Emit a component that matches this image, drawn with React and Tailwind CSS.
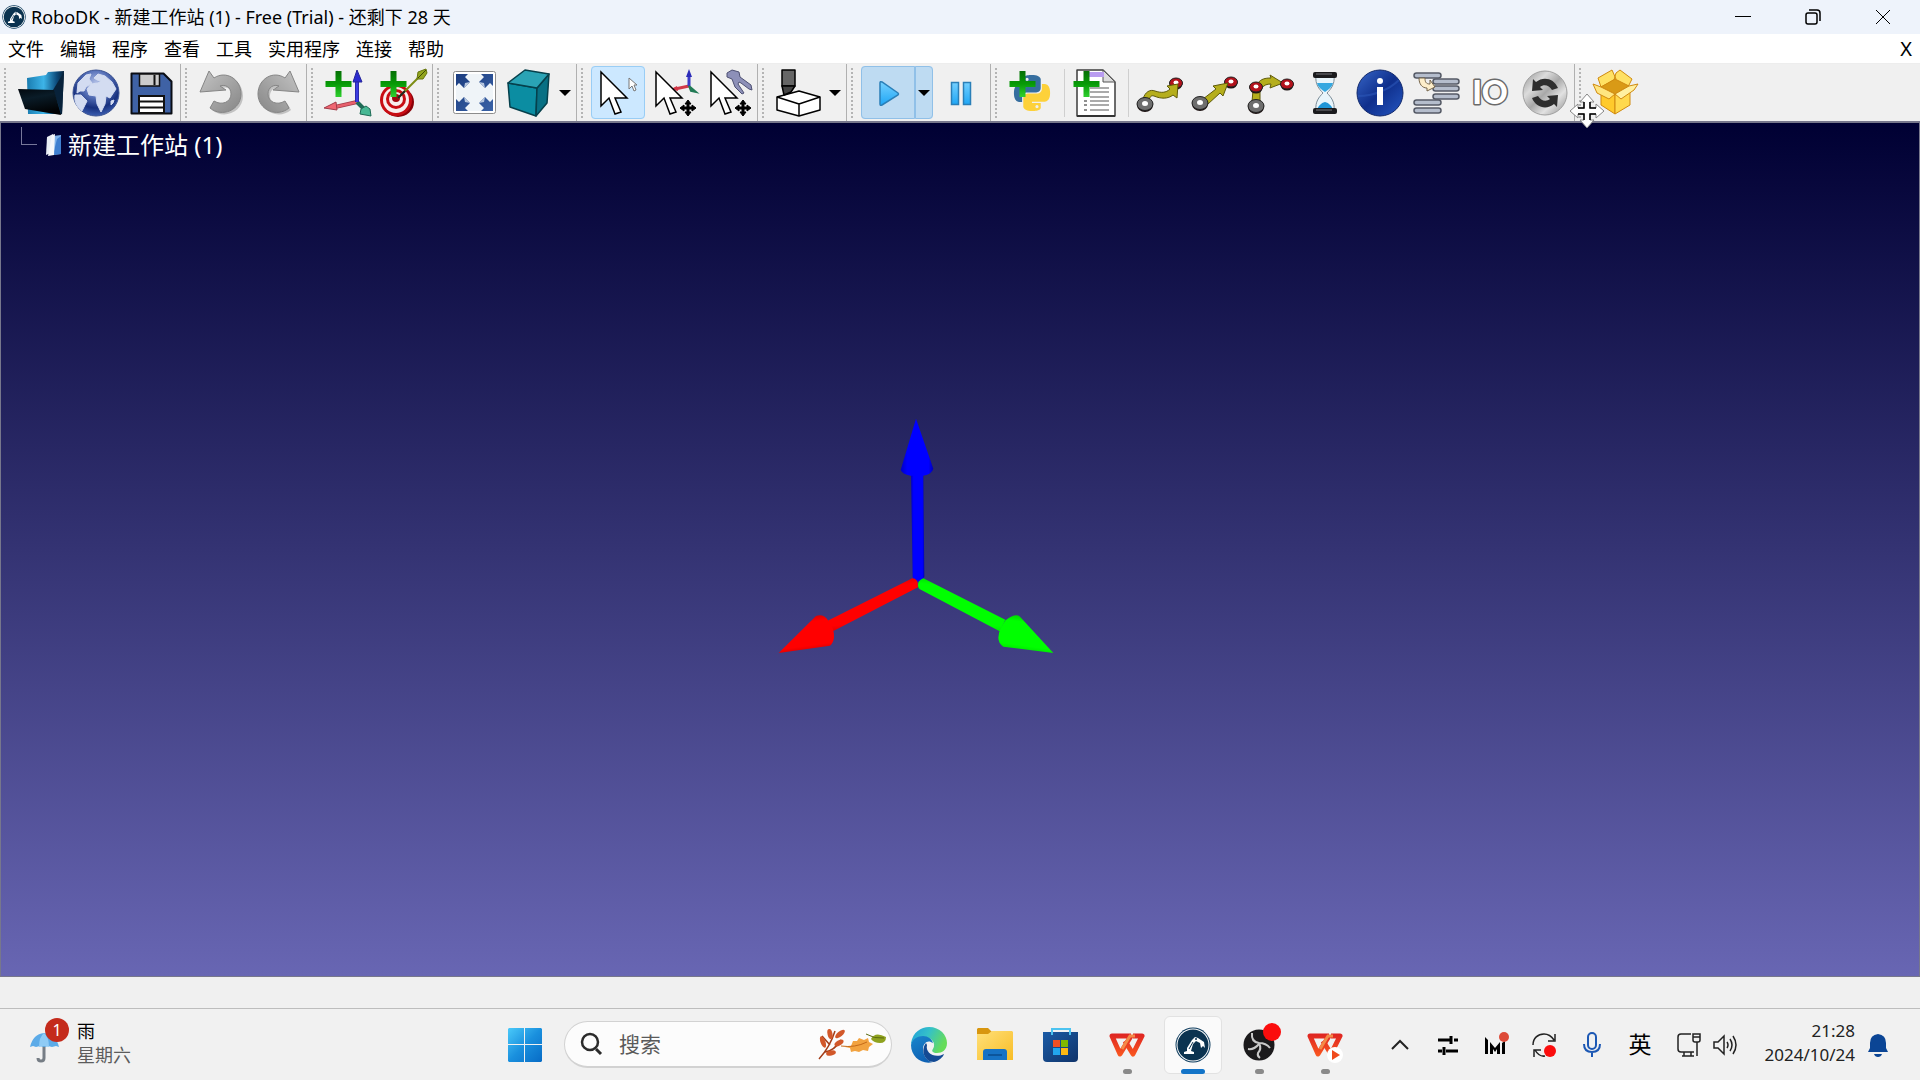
import React, { useState } from "react";

const PLUS_PATH = "M14.5 5h6v10h10v6h-10v10h-6v-10h-10v-6h10z";
const PYTHON_PATH =
  "M14.25.18l.9.2.73.26.59.3.45.32.34.34.25.34.16.33.1.3.04.26.02.2-.01.13V8.5l-.05.63-.13.55-.21.46-.26.38-.3.31-.33.25-.35.19-.35.14-.33.1-.3.07-.26.04-.21.02H8.77l-.69.05-.59.14-.5.22-.41.27-.33.32-.27.35-.2.36-.15.37-.1.35-.07.32-.04.27-.02.21v3.06H3.17l-.21-.03-.28-.07-.32-.12-.35-.18-.36-.26-.36-.36-.35-.46-.32-.59-.28-.73-.21-.88-.14-1.05-.05-1.23.06-1.22.16-1.04.24-.87.32-.71.36-.57.4-.44.42-.33.42-.24.4-.16.36-.1.32-.05.24-.01h.16l.06.01h8.16v-.83H6.18l-.01-2.75-.02-.37.05-.34.11-.31.17-.28.25-.26.31-.23.38-.2.44-.18.51-.15.58-.12.64-.1.71-.06.77-.04.84-.02 1.27.05zm-6.3 1.98l-.23.33-.08.41.08.41.23.34.33.22.41.09.41-.09.33-.22.23-.34.08-.41-.08-.41-.23-.33-.33-.22-.41-.09-.41.09z";

const Plus = () => (
  <>
    <linearGradient id="plusFill" x1="0" y1="0" x2="0" y2="1">
      <stop offset="0" stopColor="#067006" />
      <stop offset="0.5" stopColor="#079a07" />
      <stop offset="1" stopColor="#2fd02f" />
    </linearGradient>
    <path d={PLUS_PATH} fill="url(#plusFill)" />
  </>
);

const Icon = ({ children }) => (
  <svg viewBox="0 0 54 54" className="size-[54px]" aria-hidden="true">
    {children}
  </svg>
);

const FolderIcon = () => (
  <Icon>
    <defs>
      <linearGradient id="folderBack" x1="0" y1="0" x2="1" y2="0">
        <stop offset="0" stopColor="#1a7cb0" />
        <stop offset="0.45" stopColor="#3db4e8" />
        <stop offset="0.8" stopColor="#0d4c7c" />
        <stop offset="1" stopColor="#062038" />
      </linearGradient>
      <linearGradient id="folderFront" x1="0" y1="0" x2="0.3" y2="1">
        <stop offset="0" stopColor="#02080e" />
        <stop offset="0.4" stopColor="#0a1c28" />
        <stop offset="1" stopColor="#010203" />
      </linearGradient>
    </defs>
    <path d="M13 12l19-3 2-3 16-1-2 43H14z" fill="url(#folderBack)" />
    <path d="M39 24L50 6l-2 43z" fill="#08223a" />
    <path d="M4 23l36 1 7 25-36-6z" fill="url(#folderFront)" />
  </Icon>
);

const GlobeIcon = () => (
  <Icon>
    <radialGradient id="globeFill" cx="0.5" cy="0.3" r="0.7">
      <stop offset="0" stopColor="#b9c6ea" />
      <stop offset="0.4" stopColor="#5a74bb" />
      <stop offset="0.75" stopColor="#17307e" />
      <stop offset="1" stopColor="#3c5eb0" />
    </radialGradient>
    <circle cx="27" cy="27" r="23" fill="url(#globeFill)" stroke="#3c5493" />
    <g fill="#d3dcf1" stroke="#d3dcf1" strokeLinejoin="round">
      <path d="M9 17l8-8 5-1-2 5 3 4-6 4-2 4-4 0-3 2zM6 29l6 0 6 6-3 6-2 4c-5-4-8-9-7-16z" />
      <path d="M25 12l4-4 7 2 7 6 4 7-2 3-4 6-4-2-1 8-4 8-4-8-1-8-7-1-2-6 4-5 7-1 3-2-4-1z" />
      <path d="M42 35l3-1-1 3-2 2z" />
    </g>
  </Icon>
);

const SaveIcon = () => (
  <Icon>
    <path d="M7.500 7.500h32l8 8v32h-40z" fill="#3f62a5" stroke="#0a0d14" strokeWidth="2" strokeLinejoin="round" />
    <path d="M15.500 8h20v12h-20z" fill="#ccc" stroke="#111" strokeWidth="1.500" />
    <path d="M30.500 9v10" stroke="#111" strokeWidth="2" />
    <path d="M15 30h25v17H15z" fill="#fff" stroke="#111" strokeWidth="2" />
    <path d="M15 35.500h25M15 41.500h25" stroke="#111" strokeWidth="2" />
  </Icon>
);

const TurnArrow = () => (
  <>
    <linearGradient id="turnFill" x1="0" y1="0" x2="1" y2="1">
      <stop offset="0" stopColor="#c4c4c4" />
      <stop offset="1" stopColor="#868686" />
    </linearGradient>
    <path
      d="M14 5L19 12C31 4 46 13 46 28C46 44 27 52 15 42L19 35C27 40 36 36 36 28C36 21 30 18 25 20L31 24L5 26Z"
      fill="url(#turnFill)"
      stroke="#858585"
    />
  </>
);

const TurnShadow = () => (
  <path
    d="M21 14C33 6 48 15 48 30C48 46 29 54 17 44L21 37C29 42 38 38 38 30C38 23 32 20 27 22Z"
    fill="#c2c2c2"
  />
);

const UndoIcon = () => (
  <Icon>
    <TurnShadow />
    <TurnArrow />
  </Icon>
);

const RedoIcon = () => (
  <Icon>
    <g transform="translate(54 0) scale(-1 1)">
      <g transform="translate(-4 0)">
        <TurnShadow />
      </g>
      <TurnArrow />
    </g>
  </Icon>
);

const AddFrameIcon = () => (
  <Icon>
    <path d="M36 36L14 41" stroke="#a13b48" strokeWidth="4" />
    <path d="M36 36L14 41" stroke="#e8606c" strokeWidth="2.500" />
    <path d="M3 42l12-6 1 8z" fill="#f06672" stroke="#a13b48" />
    <path d="M36 36l9 9" stroke="#1f6b56" strokeWidth="4" />
    <path d="M50 50l-11-2 1-5 5-3 4 3z" fill="#48b894" stroke="#1f6b56" />
    <path d="M36 36V12" stroke="#24249a" strokeWidth="4" />
    <path d="M36 36V12" stroke="#3c3ce0" strokeWidth="2.500" />
    <path d="M36 4l5 12h-9z" fill="#2b2bd0" stroke="#24249a" />
    <Plus />
  </Icon>
);

const AddTargetIcon = () => (
  <Icon>
    <ellipse cx="22" cy="36" rx="16" ry="15" fill="#8b0008" />
    <circle cx="20" cy="34" r="16" fill="#c80d14" />
    <circle cx="20" cy="34" r="13" fill="#f8eeee" />
    <circle cx="20" cy="33" r="10" fill="#c80d14" />
    <circle cx="20" cy="33" r="7" fill="#f8eeee" />
    <circle cx="20" cy="32" r="4" fill="#a00810" />
    <path d="M22 32l20-20" stroke="#7c8d13" strokeWidth="2" />
    <path d="M22 32l7-7" stroke="#222" strokeWidth="2" />
    <path d="M41 13l1-7 8-3 1 4-4 6z" fill="#93a61e" stroke="#66740c" />
    <path d="M42 12l8-8" stroke="#3e4a05" />
    <Plus />
  </Icon>
);

const FitAllIcon = () => (
  <Icon>
    <linearGradient id="fitFill" x1="0" y1="0" x2="1" y2="1">
      <stop offset="0" stopColor="#1b3d80" />
      <stop offset="1" stopColor="#3a62a6" />
    </linearGradient>
    <rect x="6.500" y="5.500" width="42" height="42" rx="2" fill="#fff" stroke="#8c8c8c" />
    <path d="M9 8h37v37H9z" fill="#eff4f8" />
    <path
      d="M9 8h12l-3 3 5 5-6 6-5-5-3 3zM46 8v12l-3-3-5 5-6-6 5-5-3-3zM9 45V33l3 3 5-5 6 6-5 5 3 3zM46 45H34l3-3-5-5 6-6 5 5 3-3z"
      fill="url(#fitFill)"
    />
    <path d="M18 17l5-1-6 6zM37 17l-5-1 6 6zM18 36l-1-5 6 6zM37 36l1-5-6 6z" fill="#b6c6de" />
  </Icon>
);

const CubeIcon = () => (
  <Icon>
    <g stroke="#06404c" strokeWidth="1.500" strokeLinejoin="round">
      <path d="M6 17l29 5-1 28-26-9z" fill="#0b8da2" />
      <path d="M35 22L47 8l-2 29-11 13z" fill="#087084" />
      <path d="M6 17L23 4l24 4-12 14z" fill="#2aa3b5" />
    </g>
  </Icon>
);

const BigCursor = () => (
  <path
    d="M10 6v34l8-8 6 16 6-2-6-14h12z"
    fill="#fff"
    stroke="#000"
    strokeWidth="1.500"
  />
);

const MoveCross = () => (
  <path
    d="M42 34l3 4h-2v3h3v-2l4 3-4 3v-2h-3v3h2l-3 4-3-4h2v-3h-3v2l-4-3 4-3v2h3v-3h-2z"
    fill="#000"
    stroke="#000"
  />
);

const SelectIcon = () => (
  <Icon>
    <BigCursor />
    <path d="M38 12v11l3-3 2 5 2-1-2-5h3z" fill="#fff" stroke="#777" />
  </Icon>
);

const MoveFrameIcon = () => (
  <Icon>
    <path d="M43 20l-14 3" stroke="#d13848" strokeWidth="3" />
    <path d="M25 23l6-3 1 5z" fill="#d13848" />
    <path d="M43 20V8" stroke="#3a3ac8" strokeWidth="3" />
    <path d="M43 3l3 8h-6z" fill="#2b2bb8" />
    <path d="M43 20l7 6-5-1z" fill="#2fa070" stroke="#227a55" strokeWidth="2" />
    <BigCursor />
    <MoveCross />
  </Icon>
);

const MoveToolIcon = () => (
  <Icon>
    <path
      d="M26 7l5-3 7 2 1 5 11 8 1 5-3-1-8-6-2-1-1 2 6 9-2 1-7-7-3-8-5-2z"
      fill="#8d90b8"
      stroke="#4e5173"
    />
    <BigCursor />
    <MoveCross />
  </Icon>
);

const MillIcon = () => (
  <Icon>
    <g stroke="#000" strokeWidth="1.500" strokeLinejoin="round">
      <path d="M5 31l22-6 21 6v13l-21 6-22-6z" fill="#fff" />
      <path d="M5 31l22 7 21-7M27 38v12" fill="none" />
      <path d="M10 4h13v16H10z" fill="#666" />
      <path d="M10 20h13l-4 6-7 3z" fill="#444" />
    </g>
  </Icon>
);

const PlayIcon = () => (
  <Icon>
    <linearGradient id="playFill" x1="0" y1="0" x2="0" y2="1">
      <stop offset="0" stopColor="#74d0ff" />
      <stop offset="1" stopColor="#1fa6f5" />
    </linearGradient>
    <path d="M19 17q0-2 2-1l16 11q1 1 0 2L21 39q-2 1-2-1z" fill="url(#playFill)" stroke="#2a7fb8" strokeWidth="1.500" />
  </Icon>
);

const PauseIcon = () => (
  <Icon>
    <path d="M17.500 16.500h7v22h-7zM29.500 16.500h7v22h-7z" fill="url(#playFill)" stroke="#2a7fb8" strokeWidth="1.500" />
  </Icon>
);

const PythonIcon = () => (
  <Icon>
    <g transform="translate(9 9) scale(1.500)">
      <path d={PYTHON_PATH} fill="#366e9f" />
      <path d={PYTHON_PATH} fill="#fdd13a" transform="rotate(180 12 12)" />
    </g>
    <Plus />
  </Icon>
);

const AddProgramIcon = () => (
  <Icon>
    <path d="M8 4h26l12 12v34H8z" fill="#fff" stroke="#3d3d3d" strokeWidth="1.500" strokeLinejoin="round" />
    <path d="M8 50h38" stroke="#333" strokeWidth="2" />
    <path d="M34 4v12h12z" fill="#dcdcdc" stroke="#555" />
    <path d="M15 6h20v5H15z" fill="#b99cf0" />
    <path d="M21 22h19M21 26h19M21 31h19M21 35h19M21 39h19M21 44h19" stroke="#8f8f8f" strokeWidth="1.500" />
    <path d="M15 35h3M15 39h3M15 44h3" stroke="#8f8f8f" strokeWidth="2" />
    <Plus />
  </Icon>
);

const Ring = ({ cx, cy, gray }) => (
  <>
    <ellipse cx={cx} cy={cy + 1} rx={gray ? 8 : 6.5} ry={gray ? 7 : 5.5} fill="#1d1212" />
    <ellipse cx={cx} cy={cy} rx={gray ? 8 : 6.5} ry={gray ? 6.5 : 5} fill={gray ? "#6e6e6e" : "#b3121c"} stroke="#222" />
    <ellipse cx={cx} cy={cy - 0.5} rx={gray ? 3 : 2.5} ry={gray ? 2.5 : 2} fill="#fff" />
  </>
);

const MoveJointIcon = () => (
  <Icon>
    <Ring cx={43} cy={17} />
    <path
      d="M10 33c2-7 7-10 12-8 6 2 11 2 15-2l-3-3 11-2-1 14-4-3c-5 4-12 4-19 1-3-1-4 1-5 4z"
      fill="#b5ae1c"
      stroke="#5f5b0a"
    />
    <Ring cx={12} cy={38} gray />
  </Icon>
);

const MoveLinearIcon = () => (
  <Icon>
    <Ring cx={43} cy={16} />
    <path d="M15 33l13-10-3-3 15-3-5 13-3-3-12 11z" fill="#b5ae1c" stroke="#5f5b0a" />
    <Ring cx={12} cy={37} gray />
  </Icon>
);

const MoveCircularIcon = () => (
  <Icon>
    <path d="M10 24h7v12h-8z" fill="#b5ae1c" stroke="#5f5b0a" />
    <path d="M15 17c3-4 7-5 13-5l-1-3 13 8-13 5 1-4c-4 0-7 1-9 4z" fill="#b5ae1c" stroke="#5f5b0a" />
    <Ring cx={44} cy={18} />
    <Ring cx={13} cy={21} />
    <Ring cx={13} cy={40} gray />
  </Icon>
);

const WaitIcon = () => (
  <Icon>
    <path d="M18 10h18c1 8-3 13-7 17 4 4 8 9 7 17H18c-1-8 3-13 7-17-4-4-8-9-7-17z" fill="#e8f5fb" stroke="#7d8d98" />
    <path d="M19 17h16c-1 4-4 6-8 9-4-3-7-5-8-9z" fill="#35a8e0" />
    <path d="M19 44c1-4 4-7 8-8 4 1 7 4 8 8z" fill="#1f95d6" />
    <rect x="15" y="6" width="24" height="6" rx="2" fill="#1b1b1d" />
    <rect x="15" y="42" width="24" height="6" rx="2" fill="#1b1b1d" />
    <path d="M18 8h16M18 44h16" stroke="#77777d" />
  </Icon>
);

const InfoIcon = () => (
  <Icon>
    <linearGradient id="infoFill" x1="0" y1="0" x2="1" y2="1">
      <stop offset="0" stopColor="#3766c8" />
      <stop offset="0.5" stopColor="#0f2f8c" />
      <stop offset="1" stopColor="#2557c2" />
    </linearGradient>
    <circle cx="27" cy="27" r="23" fill="url(#infoFill)" stroke="#12296c" />
    <path d="M5 30C20 30 36 24 46 14" stroke="#2b57b8" strokeWidth="2" fill="none" opacity="0.6" />
    <circle cx="27" cy="15" r="3" fill="#fff" />
    <path d="M24 21h6v18h-6z" fill="#fff" />
  </Icon>
);

const CallProgramIcon = () => (
  <Icon>
    <g fill="#b5bdcc" stroke="#555a66" strokeWidth="1.500">
      <rect x="6" y="7" width="27" height="5" rx="2.500" />
      <rect x="25" y="13" width="26" height="5" rx="2.500" />
      <rect x="25" y="20" width="26" height="5" rx="2.500" />
      <rect x="25" y="28" width="26" height="5" rx="2.500" />
      <rect x="6" y="34" width="27" height="5" rx="2.500" />
      <rect x="6" y="42" width="27" height="5" rx="2.500" />
    </g>
    <path d="M11 12h6c0 4 1 6 5 6v-4l5 7-8 4v-3c-5 0-8-4-8-10z" fill="#fdeecb" stroke="#75644a" />
  </Icon>
);

const IoIcon = () => (
  <Icon>
    <text
      x="27"
      y="38"
      textAnchor="middle"
      fontFamily="Lato, sans-serif"
      fontSize="32"
      fontWeight="900"
      fill="#fff"
      stroke="#6a6a6a"
      strokeWidth="3"
      strokeLinejoin="round"
      paintOrder="stroke"
    >
      IO
    </text>
  </Icon>
);

const SyncIcon = () => (
  <Icon>
    <linearGradient id="steelFill" x1="0" y1="0" x2="1" y2="1">
      <stop offset="0" stopColor="#8e8e8e" />
      <stop offset="0.3" stopColor="#dcdcdc" />
      <stop offset="0.5" stopColor="#a8a8a8" />
      <stop offset="0.7" stopColor="#e2e2e2" />
      <stop offset="1" stopColor="#8a8a8a" />
    </linearGradient>
    <circle cx="27" cy="27" r="22" fill="url(#steelFill)" stroke="#a0a0a0" />
    <path d="M15 13l3 3c7-6 18-4 22 6l-6 2c-3-5-8-6-12-3l3 3-11 1z" fill="#2e2e2e" />
    <path d="M39 41l-3-3c-7 6-18 4-22-6l6-2c3 5 8 6 12 3l-3-3 11-1z" fill="#2e2e2e" />
  </Icon>
);

const PackageIcon = () => (
  <Icon>
    <g stroke="#d08a10" strokeLinejoin="round">
      <path d="M9 12l14-8 4 9-15 8zM27 7l4-3 12 9-4 8-14-7z" fill="#ffe164" />
      <path d="M12 21l14-8 14 7-14 8z" fill="#d99a16" />
      <path d="M12 22l14 7v19l-14-9z" fill="#ffca2c" />
      <path d="M26 29l15-8v18L26 48z" fill="#ffd94e" />
      <path d="M4 18l8 3 14 7-6 5-12-6z" fill="#ffe680" />
      <path d="M26 28l14-8 9-2-4 6-13 9z" fill="#fff0a0" />
    </g>
  </Icon>
);

const RoboLogo = ({ className }) => (
  <svg viewBox="0 0 36 36" className={className} aria-hidden="true">
    <circle cx="18" cy="18" r="17.500" fill="#0b3a5c" />
    <circle cx="18" cy="18" r="16.500" fill="#fff" />
    <circle cx="18" cy="18" r="15.500" fill="#0b3350" />
    <path d="M9 27v-2l3-1v-3l5-8 3-3 3 1 6 4 1 6-2-2-2 2-1-5-4-2-3 3-2 7 3 1v2z" fill="#fff" />
    <path d="M14 22l4-7" stroke="#0b3350" />
    <circle cx="21" cy="12" r="1" fill="#0b3350" />
  </svg>
);

const toolGroups = [
  [
    { label: "打开", Icon: FolderIcon },
    { label: "在线库", Icon: GlobeIcon },
    { label: "保存", Icon: SaveIcon },
  ],
  [
    { label: "撤销", Icon: UndoIcon },
    { label: "重做", Icon: RedoIcon },
  ],
  [
    { label: "添加坐标系", Icon: AddFrameIcon },
    { label: "添加目标", Icon: AddTargetIcon },
  ],
  [
    { label: "适合全部", Icon: FitAllIcon },
    { label: "等轴视图", Icon: CubeIcon, menu: true },
  ],
  [
    { label: "选择", Icon: SelectIcon, mode: "select" },
    { label: "移动坐标系", Icon: MoveFrameIcon, mode: "frame" },
    { label: "移动工具", Icon: MoveToolIcon, mode: "tool" },
  ],
  [{ label: "加工", Icon: MillIcon, menu: true }],
  [
    { label: "运行", Icon: PlayIcon, menu: true, on: true },
    { label: "暂停", Icon: PauseIcon },
  ],
  [
    { label: "添加 Python", Icon: PythonIcon },
    { divider: true },
    { label: "添加程序", Icon: AddProgramIcon },
    { divider: true },
    { label: "关节运动", Icon: MoveJointIcon },
    { label: "直线运动", Icon: MoveLinearIcon },
    { label: "圆弧运动", Icon: MoveCircularIcon },
    { label: "暂停指令", Icon: WaitIcon },
    { label: "显示消息", Icon: InfoIcon },
    { label: "调用程序", Icon: CallProgramIcon },
    { label: "设置 IO", Icon: IoIcon },
    { label: "同步", Icon: SyncIcon },
  ],
  [{ label: "插件包", Icon: PackageIcon }],
];

const ToolButton = ({ tool, active, onClick }) => {
  const ToolIcon = tool.Icon;
  const split = tool.menu && tool.on;

  return (
    <div className="flex shrink-0">
      <button
        aria-label={tool.label}
        onClick={onClick}
        className={`w-[54px] h-[53px] flex items-center justify-center ${
          active ? "bg-[#cce8ff] outline -outline-offset-1 outline-[#99cdf5] rounded-sm" : ""
        } ${split ? "bg-[#bedbf2] outline -outline-offset-1 outline-[#90c0e8] rounded-l-sm" : ""}`}
      >
        <ToolIcon />
      </button>
      {tool.menu && (
        <button
          aria-label={`${tool.label}选项`}
          className={`w-[18px] h-[53px] flex items-center justify-center ${
            split ? "bg-[#bedbf2] outline -outline-offset-1 outline-[#90c0e8] rounded-r-sm" : ""
          }`}
        >
          <svg viewBox="0 0 12 6" className="w-3 h-[6px]" aria-hidden="true">
            <path d="M0 0h12L6 6z" />
          </svg>
        </button>
      )}
    </div>
  );
};

const Toolbar = () => {
  const [mode, setMode] = useState("select");

  return (
    <div className="relative flex h-[57px] bg-[#f0f0f0]">
      {toolGroups.map((group, i) => (
        <div
          key={i}
          className={`flex items-center gap-px pl-1 pr-[2px] ${
            i < toolGroups.length - 1 ? "border-r border-[#b0b0b0]" : ""
          }`}
        >
          <div className="w-[9px] h-[50px] border-l-2 border-dotted border-[#b4b4b4]" />
          {group.map((tool, j) =>
            tool.divider ? (
              <div key={j} className="w-2 flex justify-center">
                <div className="w-px h-12 bg-[#cfcfcf]" />
              </div>
            ) : (
              <ToolButton
                key={j}
                tool={tool}
                active={tool.mode === mode}
                onClick={() => tool.mode && setMode(tool.mode)}
              />
            )
          )}
        </div>
      ))}

      {/* Mouse pointer while dragging the last toolbar */}
      <svg
        viewBox="0 0 36 36"
        className="absolute left-[1569px] top-[29px] size-9 z-10 pointer-events-none"
        aria-hidden="true"
      >
        <path
          d="M18 1l7 8h-4v6h6v-4l8 7-8 7v-4h-6v6h4l-7 8-7-8h4v-6H9v4l-8-7 8-7v4h6V9h-4z"
          fill="#fff"
          stroke="#888"
        />
        <path d="M15 9v6H9M21 9v6h6M15 27v-6H9M21 27v-6h6" fill="none" stroke="#000" strokeWidth="1.500" />
      </svg>
    </div>
  );
};

const TitleBar = () => (
  <header className="flex items-center h-[34px] bg-[#eef3fb]">
    <RoboLogo className="size-6 ml-[2px]" />
    <h1 className="ml-[5px] text-[18px] leading-6 whitespace-nowrap">RoboDK - 新建工作站 (1) - Free (Trial) - 还剩下 28 天</h1>
    <div className="ml-auto flex">
      <button aria-label="最小化" className="w-[70px] h-[34px] flex items-center justify-center">
        <svg viewBox="0 0 16 16" className="size-4" fill="none" stroke="#000">
          <path d="M0 7.500h16" />
        </svg>
      </button>
      <button aria-label="还原" className="w-[70px] h-[34px] flex items-center justify-center">
        <svg viewBox="0 0 16 16" className="size-4" fill="none" stroke="#000" strokeWidth="1.500">
          <rect x="1" y="4" width="11" height="11" rx="2" />
          <path d="M4 1h8q3 0 3 3v8" />
        </svg>
      </button>
      <button aria-label="关闭" className="w-[70px] h-[34px] flex items-center justify-center mr-[2px]">
        <svg viewBox="0 0 16 16" className="size-4" fill="none" stroke="#000">
          <path d="M1 1l14 14M15 1L1 15" />
        </svg>
      </button>
    </div>
  </header>
);

const menus = ["文件", "编辑", "程序", "查看", "工具", "实用程序", "连接", "帮助"];

const MenuBar = () => (
  <nav className="flex items-center h-[30px] bg-white border-b border-[#ededed] text-[18px] leading-6">
    {menus.map((name) => (
      <button key={name} className="px-2">
        {name}
      </button>
    ))}
    <button aria-label="关闭工作站" className="ml-auto px-2 text-[20px]">
      X
    </button>
  </nav>
);

// World axes, z up, x to the left and y to the right
const Axes = () => (
  <svg
    viewBox="0 0 960 810"
    className="absolute left-1/2 top-[277px] -ml-[200px] w-[320px] h-[270px]"
    role="img"
    aria-label="XYZ"
  >
    <defs>
      <linearGradient id="zShade" x1="0" y1="0" x2="1" y2="0">
        <stop offset="0" stopColor="#0000c0" />
        <stop offset="0.2" stopColor="#0000ff" />
        <stop offset="0.85" stopColor="#0000ff" />
        <stop offset="1" stopColor="#0000b4" />
      </linearGradient>
      <linearGradient id="xShade" x1="0.4" y1="0" x2="0.6" y2="1">
        <stop offset="0" stopColor="#d00000" />
        <stop offset="0.2" stopColor="#ff0000" />
        <stop offset="0.8" stopColor="#ff0000" />
        <stop offset="1" stopColor="#c80000" />
      </linearGradient>
      <linearGradient id="yShade" x1="0.6" y1="0" x2="0.4" y2="1">
        <stop offset="0" stopColor="#00c800" />
        <stop offset="0.2" stopColor="#00ff00" />
        <stop offset="0.8" stopColor="#00ff00" />
        <stop offset="1" stopColor="#00d800" />
      </linearGradient>
    </defs>
    <path d="M453 220h37l3 310q-8 18-22 14-12-2-13-14z" fill="url(#zShade)" />
    <path d="M468 56l52 150q-4 16-30 21h-38q-26-5-30-17z" fill="url(#zShade)" />
    <path d="M457 535q18 0 17 27L220 693l-17-31z" fill="url(#xShade)" />
    <path d="M56 759l112-111q22-8 37 14 18 22 17 50-2 18-12 25z" fill="url(#xShade)" />
    <path d="M490 535q-16 6-16 20 0 12 10 15l235 124 17-35z" fill="url(#yShade)" />
    <path d="M880 759L780 650q-14-12-43 11-20 24-22 52 0 16 15 27z" fill="url(#yShade)" />
  </svg>
);

const Viewport = () => (
  <main className="relative flex-1 border-x border-t-2 border-b border-[#77778c] bg-linear-to-b/srgb from-[#000033] to-[#6866b3]">
    <div className="flex items-start pl-5 pt-1">
      <div className="w-4 h-[18px] border-l border-b border-[#77779a]" />
      <div className="flex items-center ml-[9px] h-9">
        <svg viewBox="0 0 16 22" className="w-4 h-[22px]" aria-hidden="true">
          <path d="M1 3l6-3v18l-7 3z" fill="#e9eef5" />
          <path d="M7 2l8-1v19l-8 1z" fill="#7fb2ea" />
          <path d="M11 5l4-3v18l-8 1z" fill="#3f7fd0" />
          <path d="M6 1l3-1-1 21-6 1z" fill="#f6f8fb" />
        </svg>
        <span className="ml-[6px] text-[24px] leading-8 text-white">新建工作站 (1)</span>
      </div>
    </div>
    <Axes />
  </main>
);

const WeatherWidget = () => (
  <button className="flex items-center pl-[29px] pb-1 w-[492px] text-left">
    <svg viewBox="0 3 42 46" className="w-[42px] h-[46px] overflow-visible" aria-hidden="true">
      <path d="M15 29v12q0 3-3 3-3 0-3-3" fill="none" stroke="#767d85" strokeWidth="3" />
      <path d="M1 30q3-13 14-14 12 1 15 14l-3-1-4 1-4-1-4 1-4-1-4 1-3-1z" fill="#5cabe8" />
      <path d="M10 30q0-10 5-14 5 4 5 14l-5-1z" fill="#8fcbf5" />
      <circle cx="28" cy="13" r="12" fill="#c42b1c" />
      <text x="28" y="19" textAnchor="middle" fontSize="16" fill="#fff">
        1
      </text>
    </svg>
    <span className="ml-[6px] text-[18px] leading-6">
      <span className="block text-black">雨</span>
      <span className="block text-[#5c5c5c]">星期六</span>
    </span>
  </button>
);

const StartIcon = () => (
  <svg viewBox="0 0 36 36" className="size-9" aria-hidden="true">
    <linearGradient id="winFill" gradientUnits="userSpaceOnUse" x1="0" y1="0" x2="36" y2="36">
      <stop offset="0" stopColor="#4dcdfb" />
      <stop offset="0.5" stopColor="#1a90de" />
      <stop offset="1" stopColor="#0669c4" />
    </linearGradient>
    <path d="M2 1h15v16H1V2zM18 1h16l1 1v15H18zM1 18h16v17H2l-1-1zM18 18h17v16l-1 1H18z" fill="url(#winFill)" />
  </svg>
);

const EdgeIcon = () => (
  <svg viewBox="0 0 36 36" className="size-9" aria-hidden="true">
    <defs>
      <linearGradient id="edgeTop" x1="0" y1="0" x2="1" y2="0.4">
        <stop offset="0" stopColor="#1e9ddc" />
        <stop offset="0.5" stopColor="#35c1c8" />
        <stop offset="1" stopColor="#66dc5a" />
      </linearGradient>
      <linearGradient id="edgeLeft" x1="0" y1="0" x2="0.4" y2="1">
        <stop offset="0" stopColor="#1a86cc" />
        <stop offset="1" stopColor="#0f62b4" />
      </linearGradient>
    </defs>
    <path d="M0 16C2 5 10 0 18 0c11 0 18 8 18 16 0 7-5 10-10 10-4 0-6-2-4-4 4-7-3-13-11-12C5 11 1 14 0 18z" fill="url(#edgeTop)" />
    <path d="M0 18c1-6 7-9 12-9 5 0 9 3 10 7-5-4-10 0-10 6 0 7 5 13 10 13-11 3-22-5-22-17z" fill="url(#edgeLeft)" />
    <path d="M15 16c-6 8-1 19 8 19 5-1 9-5 10-8-9 5-19-1-17-9z" fill="#134a94" />
  </svg>
);

const ExplorerIcon = () => (
  <svg viewBox="0 0 36 36" className="size-9" aria-hidden="true">
    <linearGradient id="folderYellow" x1="0" y1="0" x2="1" y2="1">
      <stop offset="0" stopColor="#ffe07a" />
      <stop offset="1" stopColor="#f8bd26" />
    </linearGradient>
    <path d="M0 2l1-1h10l4 4-4 4H0z" fill="#d8960f" />
    <path d="M0 7h11l4-3h20l1 1v28H0z" fill="url(#folderYellow)" />
    <path d="M6 33v-8q0-3 3-3h18q3 0 3 3v8z" fill="#1672c4" />
    <path d="M11 28h14" stroke="#0a4c8e" strokeWidth="1.500" />
  </svg>
);

const StoreIcon = () => (
  <svg viewBox="0 0 36 36" className="size-9" aria-hidden="true">
    <linearGradient id="bagFill" x1="0" y1="0" x2="1" y2="1">
      <stop offset="0" stopColor="#1a5ba6" />
      <stop offset="1" stopColor="#10346a" />
    </linearGradient>
    <path d="M0 5h35v26q0 4-4 4H4q-4 0-4-4z" fill="url(#bagFill)" />
    <path d="M9 8V2h18v6" fill="none" stroke="#4cc3f0" strokeWidth="2" />
    <path d="M10 13h7v7h-7z" fill="#f05025" />
    <path d="M18 13h7v7h-7z" fill="#7fba00" />
    <path d="M10 21h7v7h-7z" fill="#22a6ee" />
    <path d="M18 21h7v7h-7z" fill="#fdb913" />
  </svg>
);

// Logo of two interlocked outlined triangles
const WpsMark = () => (
  <>
    <linearGradient id="wpsFill" gradientUnits="userSpaceOnUse" x1="0" y1="6" x2="0" y2="30">
      <stop offset="0" stopColor="#dd2222" />
      <stop offset="1" stopColor="#fb5a20" />
    </linearGradient>
    <g fill="none" stroke="url(#wpsFill)" strokeWidth="5" strokeLinejoin="round">
      <path d="M22 9H3l8 18 11-18" />
      <path d="M16 14l8 13 9-18h-9" />
    </g>
    <path d="M13 22L21 9h5" fill="none" stroke="#f48a48" strokeWidth="3" />
  </>
);

const WpsIcon = () => (
  <svg viewBox="0 0 36 36" className="size-9" aria-hidden="true">
    <WpsMark />
  </svg>
);

const WpsPlayIcon = () => (
  <svg viewBox="0 0 36 36" className="size-9" aria-hidden="true">
    <WpsMark />
    <circle cx="28" cy="28" r="8" fill="#fff" />
    <path d="M25 23l8 5-8 5z" fill="#f04a1c" />
  </svg>
);

const ObsIcon = () => (
  <svg viewBox="0 0 36 36" className="size-9 overflow-visible" aria-hidden="true">
    <circle cx="18" cy="18" r="15.500" fill="#1b1a1c" />
    <g fill="none" stroke="#c9c9c9" strokeWidth="2">
      <path d="M11 6q-1 9 7 10 7 0 11 5" />
      <path d="M21 16q-6 4-6 7-3 4-9 2" opacity="0" />
      <path d="M18 16q3 6-1 10-1 3 2 5" />
      <path d="M18 17q-5 6-11 5" />
    </g>
    <circle cx="31" cy="5" r="9" fill="#fb0d0d" />
  </svg>
);

const apps = [
  { name: "Microsoft Edge", Icon: EdgeIcon },
  { name: "文件资源管理器", Icon: ExplorerIcon },
  { name: "Microsoft Store", Icon: StoreIcon },
  { name: "WPS Office", Icon: WpsIcon, running: true },
  { name: "RoboDK", Icon: () => <RoboLogo className="size-9" />, active: true },
  { name: "OBS Studio", Icon: ObsIcon, running: true },
  { name: "WPS 演示", Icon: WpsPlayIcon, running: true },
];

const SearchBox = () => (
  <label className="flex items-center w-[328px] h-[47px] ml-[6px] mr-1 pl-[14px] pr-1 rounded-full bg-[#fcfcfc] border border-b-2 border-[#d2d2d2]">
    <svg viewBox="0 0 24 24" className="size-6 shrink-0" fill="none" stroke="#2b2b2b" strokeWidth="2.500" aria-hidden="true">
      <circle cx="11" cy="10" r="8" />
      <path d="M17 17l5 5" strokeWidth="3" />
    </svg>
    <input
      type="text"
      aria-label="搜索"
      placeholder="搜索"
      className="ml-4 min-w-0 flex-1 bg-transparent text-[21px] leading-8 outline-none placeholder:text-[#5a5a5a]"
    />
    <svg viewBox="0 0 70 34" className="w-[70px] h-[34px] shrink-0" aria-hidden="true">
      <path d="M2 32Q13 20 18 4M8 25q9-1 16-12M13 18l-8-9" fill="none" stroke="#a33d18" strokeWidth="1.500" />
      <g fill="#d2582a">
        <ellipse cx="13" cy="7" rx="2.500" ry="5" transform="rotate(-12 13 7)" />
        <ellipse cx="23" cy="7" rx="2.500" ry="6" transform="rotate(50 23 7)" />
        <ellipse cx="6" cy="15" rx="2.500" ry="6" transform="rotate(-20 6 15)" />
        <ellipse cx="22" cy="16" rx="2.500" ry="5" transform="rotate(60 22 16)" />
        <ellipse cx="14" cy="26" rx="2.500" ry="5" transform="rotate(75 14 26)" />
      </g>
      <path d="M28 20l6-1 2-5 4 0 2-3 5 2 4-2 1 4 4 2-4 3-1 4-5-1-4 2-4-1-4 1-1-4z" fill="#f2a340" />
      <path d="M24 19q14 2 26-4" fill="none" stroke="#c56a18" />
      <path d="M54 12q4-8 15-2 0 6-6 6-6 0-9-4z" fill="#8fa21f" />
      <path d="M49 7q8 5 18 4" fill="none" stroke="#5d6b10" />
    </svg>
  </label>
);

const trayItems = [
  {
    name: "显示隐藏的图标",
    art: <path d="M4 16l8-8 8 8" fill="none" stroke="#222" strokeWidth="2" />,
  },
  {
    name: "设置",
    art: (
      <g stroke="#000" strokeWidth="3" fill="none">
        <path d="M2 7h12M18 7h4M2 18h4M10 18h12" />
        <path d="M15 3v8M8 14v8" strokeWidth="3" />
      </g>
    ),
  },
  {
    name: "小米",
    art: (
      <>
        <path d="M1 4l3 3v14H1zM6 21V9l5 6 5-6v12h-3v-5l-2 3-2-3v5zM18 10l3-2v13h-3z" fill="#000" />
        <circle cx="20" cy="4" r="5" fill="#dd4a38" />
      </>
    ),
  },
  {
    name: "同步中心",
    art: (
      <>
        <path d="M1 12C1 5 6 1 12 1q6 0 10 6M23 1v7h-7M2 24v-7h7M3 17q4 7 10 6" fill="none" stroke="#222" strokeWidth="1.500" />
        <circle cx="18" cy="18" r="6" fill="#fb0d0d" />
      </>
    ),
  },
  {
    name: "麦克风",
    art: (
      <g fill="none" stroke="#1c58b4" strokeWidth="2">
        <rect x="8" y="0" width="8" height="16" rx="4" />
        <path d="M4 11q0 8 8 8t8-8M12 19v5" />
      </g>
    ),
  },
];

const Taskbar = () => (
  <footer className="flex h-[71px] bg-[#f1f1f1]">
    <WeatherWidget />
    <div className="flex items-center">
      <button aria-label="开始" className="w-[66px] flex justify-center">
        <StartIcon />
      </button>
      <SearchBox />
      {apps.map(({ name, Icon: AppIcon, running, active }) => (
        <button key={name} aria-label={name} className="w-[66px] h-[58px] flex justify-center">
          <span
            className={`relative flex w-[58px] h-[58px] items-center justify-center rounded-md ${
              active ? "bg-[#fafafa] border border-[#e2e2e2]" : ""
            }`}
          >
            <AppIcon />
            {running && <span className="absolute bottom-0 w-[9px] h-[5px] rounded-full bg-[#8a8a8a]" />}
            {active && <span className="absolute -bottom-px w-6 h-[5px] rounded-full bg-[#1374c8]" />}
          </span>
        </button>
      ))}
    </div>

    {/* System tray */}
    <div className="ml-auto flex items-center pr-[30px]">
      {trayItems.map((item) => (
        <button key={item.name} aria-label={item.name} className="w-12 flex justify-center">
          <svg viewBox="0 0 24 24" className="size-6 overflow-visible" aria-hidden="true">
            {item.art}
          </svg>
        </button>
      ))}
      <button className="w-12 pb-[2px] text-[23px] leading-8 text-black">英</button>
      <button aria-label="网络和音量" className="flex items-center justify-center gap-3 w-[86px]">
        <svg viewBox="0 0 24 24" className="size-6 overflow-visible" fill="none" stroke="#222" strokeWidth="1.500" aria-hidden="true">
          <path d="M14 1H4Q1 1 1 4v12q0 3 3 3h13M7 19v4M14 19v4M5 23h12" />
          <path d="M16 1h7v6q0 2-2 2h-3q-2 0-2-2zM20 9v14M16 4h7" />
        </svg>
        <svg viewBox="0 0 24 24" className="size-6" fill="none" stroke="#222" strokeWidth="1.500" aria-hidden="true">
          <path d="M1 9h4l6-6v18l-6-6H1zM14 9q2 3 0 6M17 6q4 6 0 12M20 3q6 9 0 18" />
        </svg>
      </button>
      <button className="w-[105px] pb-1 text-right text-[17px] leading-6 text-[#222]">
        <span className="block">21:28</span>
        <span className="block">2024/10/24</span>
      </button>
      <button aria-label="通知" className="ml-[11px]">
        <svg viewBox="0 0 24 24" className="size-6" fill="#0b4595" aria-hidden="true">
          <path d="M12 1q8 1 8 9v5l2 4H2l2-4v-5q0-8 8-9zM8 21h8q-1 3-4 3t-4-3z" />
        </svg>
      </button>
    </div>
  </footer>
);

export default function App() {
  return (
    <div className="flex flex-col min-h-screen overflow-hidden bg-[#f0f0f0] text-black font-['Noto_Sans','Noto_Sans_CJK_SC',sans-serif]">
      <TitleBar />
      <MenuBar />
      <Toolbar />
      <Viewport />
      <div className="h-8 bg-[#f0f0f0] border-b border-[#bdbdbd]" role="status" />
      <Taskbar />
    </div>
  );
}
